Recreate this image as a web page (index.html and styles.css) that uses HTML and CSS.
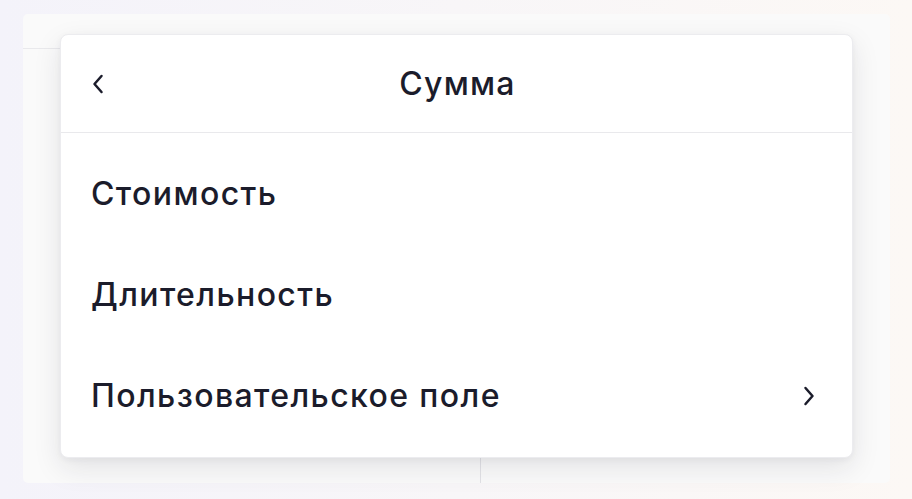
FILE: index.html
```html
<!DOCTYPE html>
<html lang="ru">
<head>
<meta charset="utf-8">
<link rel="stylesheet" href="styles.css">
</head>
<body>
<div class="stage">
  <div class="panel">
    <div class="panel-top">
      <div class="panel-top-left"></div>
    </div>
    <div class="panel-bottom">
      <div class="panel-col"></div>
      <div class="panel-col panel-col-right"></div>
    </div>
    <div class="menu">
      <div class="menu-header">
        <button class="back" aria-label="Назад">
          <svg width="14" height="22" viewBox="0 0 14 22"><path d="M10.5 3 L3.5 11 L10.5 19" fill="none" stroke="#1b1c2b" stroke-width="2.5" stroke-linecap="round" stroke-linejoin="round"/></svg>
        </button>
        <div class="menu-title">Сумма</div>
      </div>
      <ul class="menu-list">
        <li class="menu-item">Стоимость</li>
        <li class="menu-item">Длительность</li>
        <li class="menu-item">
          <span>Пользовательское поле</span>
          <svg class="chev" width="14" height="22" viewBox="0 0 14 22"><path d="M3.5 3 L10.5 11 L3.5 19" fill="none" stroke="#1b1c2b" stroke-width="2.5" stroke-linecap="round" stroke-linejoin="round"/></svg>
        </li>
      </ul>
    </div>
  </div>
</div>
</body>
</html>
```

FILE: styles.css
```css
* { box-sizing: border-box; }
html, body { margin: 0; padding: 0; }
body {
  width: 912px;
  height: 499px;
  overflow: hidden;
  font-family: Inter, "Noto Sans", sans-serif;
  color: #1b1c2b;
  background: linear-gradient(90deg, #f4f3fa 0%, #f8f6f8 50%, #fcf8f5 100%);
}
.stage {
  padding: 14px 22px 16px 23px;
  height: 499px;
}
.panel {
  position: relative;
  width: 867px;
  height: 469px;
  background: #fafafa;
  border-radius: 5px;
  display: flex;
  flex-direction: column;
}
.panel-top {
  height: 35px;
}
.panel-top-left {
  width: 458px;
  height: 35px;
  border-bottom: 1px solid #e9e9ec;
}
.panel-bottom {
  flex: 1;
  display: flex;
}
.panel-col {
  width: 458px;
  border-right: 1px solid #e2e2e6;
}
.panel-col-right { border-right: 0; flex: 1; }
.menu {
  position: absolute;
  left: 37px;
  top: 20px;
  width: 793px;
  height: 424px;
  background: #ffffff;
  border-radius: 8px;
  border: 1px solid #ececef;
  box-shadow: 0 10px 28px rgba(30, 30, 50, 0.10), 0 2px 6px rgba(30, 30, 50, 0.05);
  display: flex;
  flex-direction: column;
}
.menu-header {
  position: relative;
  height: 99px;
  border-bottom: 1px solid #e9e9ec;
  display: flex;
  align-items: center;
  justify-content: center;
}
.back {
  position: absolute;
  left: 30px;
  top: 38px;
  border: 0;
  background: none;
  padding: 0;
  display: flex;
}
.menu-title {
  font-size: 32px;
  font-weight: 500;
  letter-spacing: 1.2px;
  margin-left: 2px;
}
.menu-list {
  list-style: none;
  margin: 0;
  padding: 10px 0 11px;
}
.menu-item {
  height: 101px;
  padding: 0 36px 0 30px;
  display: flex;
  align-items: center;
  justify-content: space-between;
  font-size: 32px;
  font-weight: 500;
  letter-spacing: 1.4px;
}
.chev { display: block; }
```
